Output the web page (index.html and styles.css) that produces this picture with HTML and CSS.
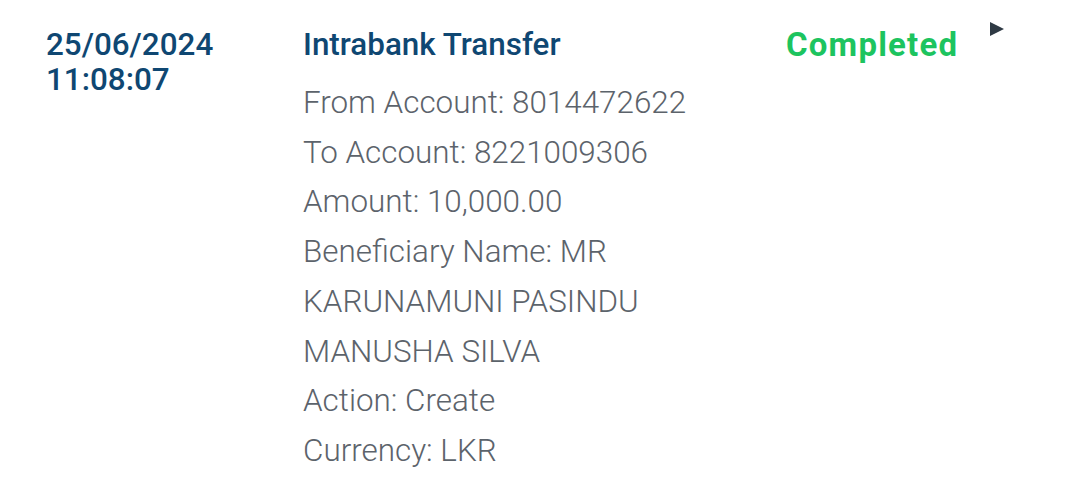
FILE: index.html
```html
<!DOCTYPE html>
<html>
<head>
<meta charset="utf-8">
<link rel="stylesheet" href="styles.css">
</head>
<body>
<div class="row">
  <div class="date">
    <div>25/06/2024</div>
    <div>11:08:07</div>
  </div>
  <div class="details">
    <div class="title">Intrabank Transfer</div>
    <div class="line">From Account: 8014472622</div>
    <div class="line">To Account: 8221009306</div>
    <div class="line">Amount: 10,000.00</div>
    <div class="line">Beneficiary Name: MR<br>KARUNAMUNI PASINDU<br>MANUSHA SILVA</div>
    <div class="line">Action: Create</div>
    <div class="line">Currency: LKR</div>
  </div>
  <div class="status">Completed</div>
  <div class="arrow"></div>
</div>
</body>
</html>
```
FILE: styles.css
```css
html, body {
  margin: 0;
  padding: 0;
  background: #fff;
  font-family: Roboto, "Liberation Sans", sans-serif;
}
.row {
  display: flex;
  align-items: flex-start;
  padding: 26px 0 0 46px;
}
.date {
  width: 257px;
  color: #0f4772;
  font-weight: 500;
  font-size: 31.4px;
  line-height: 35px;
  padding-top: 1px;
}
.details {
  width: 483px;
}
.title {
  color: #0f4772;
  font-weight: 500;
  font-size: 31.4px;
  line-height: 38px;
  margin-bottom: 14px;
}
.line {
  color: #5c636b;
  font-weight: 300;
  font-size: 31.4px;
  line-height: 49.7px;
}
.status {
  color: #1dc45f;
  font-weight: 700;
  font-size: 33px;
  letter-spacing: 1.2px;
  line-height: 38px;
  width: 204px;
}
.arrow {
  margin-top: -4px;
  width: 0;
  height: 0;
  border-top: 7.5px solid transparent;
  border-bottom: 7.5px solid transparent;
  border-left: 14px solid #2f3a44;
}
```
